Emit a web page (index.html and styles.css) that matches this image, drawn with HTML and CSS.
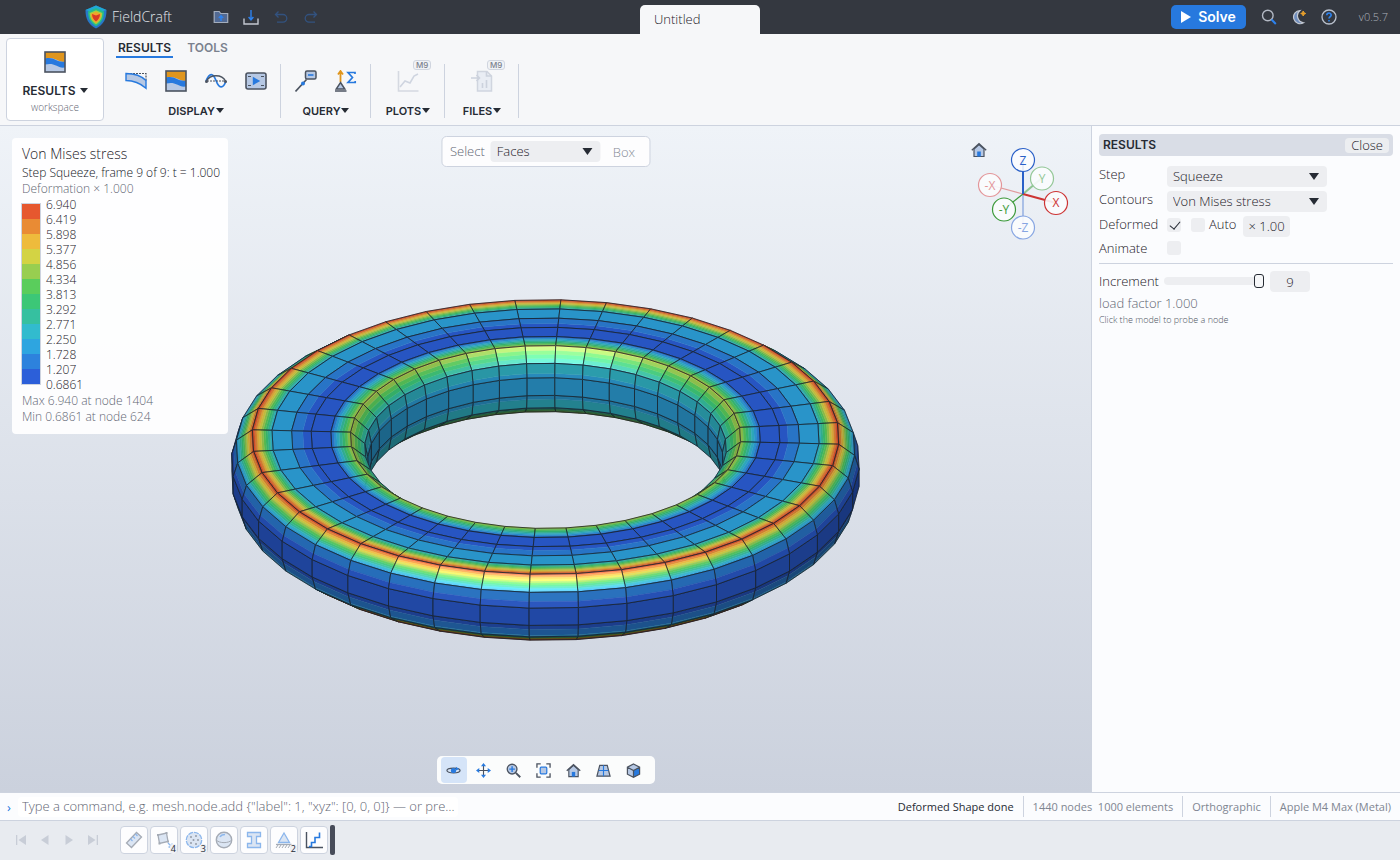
FILE: index.html
```html
<!DOCTYPE html>
<html lang="en">
<head>
<meta charset="utf-8">
<title>FieldCraft</title>
<link rel="stylesheet" href="styles.css">
</head>
<body>
<svg class="defs" width="0" height="0" aria-hidden="true">
  <defs>
    <symbol id="contour" viewBox="0 0 22 22">
      <rect x="1" y="1" width="20" height="20" fill="#b6c8e4"/>
      <path d="M1 1h20v10c-4 0-6-1-9-2.500s-6-2-11-1z" fill="#df951d"/>
      <path d="M1 7.500c5-1 8 0 11 1.500s5 2 9 1.500v6c-4 .5-6-.5-9-2s-6-2-11-1z" fill="#2779de"/>
      <rect x="1" y="1" width="20" height="20" fill="none" stroke="#4b5360" stroke-width="1.600"/>
    </symbol>
    <symbol id="home" viewBox="0 0 16 16">
      <path d="M3 7v7.500h10V7L8 2.500z" fill="#b6c8e4" stroke="#4b5360" stroke-width="1.200"/>
      <path d="M.8 8.200 8 1.800l7.200 6.400" fill="none" stroke="#4b5360" stroke-width="1.400"/>
      <path d="M6.200 9.500h3.600v5H6.200z" fill="#2779de"/>
    </symbol>
  </defs>
</svg>

<header class="titlebar">
  <div class="title-left">
    <svg class="logo" viewBox="0 0 22 24" aria-hidden="true">
      <path d="M11 .5 21.500 5c0 9-3 14.500-10.500 18.500C3.500 19.500.5 14 .5 5z" fill="#2778c8"/>
      <path d="M11 .5 21.500 5 11 8 .5 5z" fill="#20a9d4"/>
      <path d="M11 3 19 6.500c0 7-2.500 11.500-8 14.800C5.500 18 3 13.500 3 6.500z" fill="#25bb8c"/>
      <path d="M11 5.200 17.300 8c0 5-2 8.500-6.300 11.300C6.700 16.500 4.700 13 4.700 8z" fill="#a9cf3d"/>
      <path d="M11 6.700 16 9c0 4-1.500 6.500-5 9-3.500-2.500-5-5-5-9z" fill="#f0a52c"/>
      <path d="M11 10.500 15 9c0 3.500-1.500 5.500-4 7.500-2.500-2-4-4-4-7.500z" fill="#d83a24"/>
    </svg>
    <span class="brand">FieldCraft</span>
    <nav class="file-tools" aria-label="File">
      <button class="tool" aria-label="Open"><svg viewBox="0 0 16 16"><path d="M1.200 13.500v-11h5l1.500 2h7v9z" fill="#526a94" stroke="#a3adbd" stroke-width="1.200"/><path d="M8 12V7.500M5.800 9 8 6.800 10.200 9" fill="none" stroke="#2d82ee" stroke-width="1.500"/></svg></button>
      <button class="tool" aria-label="Save"><svg viewBox="0 0 16 16"><path d="M1 9.500V15h14V9.500" fill="none" stroke="#c3c8d1" stroke-width="1.400"/><path d="M8 1v9M5.600 8 8 10.800 10.400 8" fill="none" stroke="#2d82ee" stroke-width="1.400"/></svg></button>
      <button class="tool" aria-label="Undo"><svg viewBox="0 0 16 16"><path d="M5.500 2.500 2.500 5.500l3 3M2.500 5.500H10a3.800 3.800 0 0 1 0 7.600H4" fill="none" stroke="#32527f" stroke-width="1.300"/></svg></button>
      <button class="tool" aria-label="Redo"><svg viewBox="0 0 16 16"><path d="m10.500 2.500 3 3-3 3M13.500 5.500H6a3.800 3.800 0 0 0 0 7.600h6" fill="none" stroke="#32527f" stroke-width="1.300"/></svg></button>
    </nav>
  </div>
  <button class="doc-tab">Untitled</button>
  <div class="title-right">
    <button class="solve"><svg viewBox="0 0 10 12" aria-hidden="true"><path d="M0 0 10 6 0 12z" fill="#fff"/></svg>Solve</button>
    <button class="tool" aria-label="Search"><svg viewBox="0 0 16 16"><circle cx="6.800" cy="6.500" r="5.300" fill="none" stroke="#b3b9c4" stroke-width="1.400"/><path d="m10.500 10.500 4.300 4.500" stroke="#2d82ee" stroke-width="2"/></svg></button>
    <button class="tool" aria-label="Theme"><svg viewBox="0 0 16 16"><path d="M9 1.500a6.600 6.600 0 1 0 3.500 12.300A7 7 0 0 1 9 1.500z" fill="#6f8dbd" stroke="#c3c8d1" stroke-width="1.200"/><path d="m12.200 2 .8 1.700 1.700.8-1.700.8-.8 1.700-.8-1.700-1.700-.8 1.700-.8z" fill="#e8a02c" stroke="#e8a02c"/></svg></button>
    <button class="tool" aria-label="Help"><svg viewBox="0 0 16 16"><circle cx="8" cy="8" r="7" fill="none" stroke="#b9c0cc" stroke-width="1.300"/><path d="M5.800 6.300c0-3 4.400-3 4.400-.2 0 1.700-2.200 1.600-2.200 3.400M8 11v1.500" fill="none" stroke="#2d82ee" stroke-width="1.600"/></svg></button>
    <span class="version">v0.5.7</span>
  </div>
</header>

<section class="ribbon">
  <button class="workspace">
    <svg class="icon22"><use href="#contour"/></svg>
    <span class="workspace-name caret">RESULTS</span>
    <span class="workspace-sub">workspace</span>
  </button>
  <div class="ribbon-body">
    <nav class="ribbon-tabs"><button class="ribbon-tab active">RESULTS</button><button class="ribbon-tab">TOOLS</button></nav>
    <div class="groups">
      <div class="group">
        <div class="group-icons">
          <button class="big" aria-label="Deformed shape"><svg viewBox="0 0 22 22"><path d="M2 3.500h19v8" fill="none" stroke="#4b5360" stroke-width="1.200" stroke-dasharray="2 1"/><path d="M1 3.500c8 0 15 2 20 7v7.700C15 13 8 10.500 1 10.500z" fill="#b6c8e4" stroke="#2779de" stroke-width="1.400"/></svg></button>
          <button class="big" aria-label="Contours"><svg class="icon22"><use href="#contour"/></svg></button>
          <button class="big" aria-label="Mode shape"><svg viewBox="0 0 22 22"><path d="M1 11C4.500 2.500 8 2.500 11 10.500S18 19.500 21 11" fill="none" stroke="#2779de" stroke-width="1.700"/><path d="M1.500 11C5 4 17 4 20.500 11" fill="none" stroke="#4b5360" stroke-width="1.500"/><path d="M2 11h18" stroke="#4b5360" stroke-dasharray="2 1"/><circle cx="1.500" cy="11.500" r="1.500" fill="#4b5360"/><circle cx="20.500" cy="11.500" r="1.500" fill="#4b5360"/></svg></button>
          <button class="big" aria-label="Animation"><svg viewBox="0 0 22 22"><rect x="1" y="3" width="20" height="16" rx="2" fill="#b6c8e4" stroke="#4b5360" stroke-width="1.600"/><path d="M3 6.500h3M16 6.500h3M3 15.500h3M16 15.500h3" stroke="#4b5360" stroke-width="1.200"/><path d="m7.800 6.700 7.500 4.300-7.500 4.300z" fill="#2779de"/></svg></button>
        </div>
        <button class="group-label caret">DISPLAY</button>
      </div>
      <div class="group">
        <div class="group-icons">
          <button class="big" aria-label="Probe"><svg viewBox="0 0 22 22"><path d="m.5 21.500 11-12" stroke="#4b5360" stroke-width="1.600"/><circle cx="8" cy="13.500" r="2" fill="#2779de"/><rect x="10.500" y="1" width="10.500" height="8" rx="1.500" fill="#b6c8e4" stroke="#4b5360" stroke-width="1.500"/><path d="M13 5h5.500" stroke="#2779de" stroke-width="1.600"/></svg></button>
          <button class="big" aria-label="Reactions"><svg viewBox="0 0 22 22"><path d="M5.500 12V2M3 4.500 5.500 1 8 4.500" fill="none" stroke="#df951d" stroke-width="1.800"/><path d="m5.500 12.500 4.300 6.500H1.200z" fill="#b6c8e4" stroke="#4b5360" stroke-width="1.500"/><path d="M0 21h11.500" stroke="#4b5360" stroke-width="1.500"/><path d="M20 4V2.500h-7l4.500 5-4.500 5h7.200V11" fill="none" stroke="#2779de" stroke-width="1.700"/></svg></button>
        </div>
        <button class="group-label caret">QUERY</button>
      </div>
      <div class="group narrow">
        <div class="group-icons">
          <button class="big" aria-label="Plots"><svg viewBox="0 0 22 22"><path d="M1.500 1v20h20" fill="none" stroke="#d5d9e1" stroke-width="1.600"/><path d="m3 17 5-6 5 2 4-7 4-2" fill="none" stroke="#cfd5e0" stroke-width="1.600"/></svg><span class="badge">M9</span></button>
        </div>
        <button class="group-label caret">PLOTS</button>
      </div>
      <div class="group narrow">
        <div class="group-icons">
          <button class="big" aria-label="Files"><svg viewBox="0 0 22 22"><path d="M6.500 1.500H16l4.500 4.500v15h-14z" fill="#e9edf4" stroke="#d0d5df" stroke-width="1.500"/><path d="M15.500 1.500V6h5M11.500 18v-5M15.500 18v-8" fill="none" stroke="#ccd2dd" stroke-width="1.600"/><path d="M0 8h8M5.500 5l3 3-3 3" fill="none" stroke="#ccd2dd" stroke-width="1.600"/></svg><span class="badge">M9</span></button>
        </div>
        <button class="group-label caret">FILES</button>
      </div>
    </div>
  </div>
</section>

<main class="workarea">
  <section class="viewport">
    <svg class="model" id="model" viewBox="0 126 1091 666" role="img" aria-label="Contour plot of the squeezed ring"></svg>

    <aside class="legend">
      <h2 class="legend-title">Von Mises stress</h2>
      <p class="legend-step">Step Squeeze, frame 9 of 9: t = 1.000</p>
      <p class="legend-note">Deformation × 1.000</p>
      <div class="scale">
        <div class="scale-bar"><i class="c12"></i><i class="c11"></i><i class="c10"></i><i class="c9"></i><i class="c8"></i><i class="c7"></i><i class="c6"></i><i class="c5"></i><i class="c4"></i><i class="c3"></i><i class="c2"></i><i class="c1"></i></div>
        <ol class="ticks"><li>6.940</li><li>6.419</li><li>5.898</li><li>5.377</li><li>4.856</li><li>4.334</li><li>3.813</li><li>3.292</li><li>2.771</li><li>2.250</li><li>1.728</li><li>1.207</li><li>0.6861</li></ol>
      </div>
      <p class="legend-note">Max 6.940 at node 1404</p>
      <p class="legend-note">Min 0.6861 at node 624</p>
    </aside>

    <div class="select-bar">
      <label for="pick">Select</label>
      <span class="dropdown"><select id="pick"><option>Faces</option></select></span>
      <button class="box-button" disabled>Box</button>
    </div>

    <div class="gizmo">
      <button class="gizmo-home" aria-label="Home view"><svg><use href="#home"/></svg></button>
      <svg class="axes" viewBox="976 146 94 96" role="img" aria-label="View axes">
        <g fill="#fbfcfe" fill-opacity=".9" stroke-width="1.200" text-anchor="middle">
          <path d="M1023 194 1042 178" stroke="#8fc592" stroke-width="2"/>
          <path d="M1023 194 990 185" stroke="#e09a9c"/>
          <path d="M1023 194V228" stroke="#7f9fdc"/>
          <circle cx="1042" cy="178.500" r="11.500" stroke="#93c796"/>
          <circle cx="990" cy="185" r="11.500" stroke="#e3969a"/>
          <circle cx="1023" cy="227.500" r="11.500" stroke="#86a5e2"/>
          <path d="M1023 194 1004 209" stroke="#3c9a3a"/>
          <path d="M1023 194 1056 203" stroke="#cd3434" stroke-width="2"/>
          <path d="M1023 194V160" stroke="#2a60c8" stroke-width="2"/>
          <circle cx="1004" cy="209.500" r="11.500" stroke="#3c9a3a"/>
          <circle cx="1056" cy="203" r="11.500" stroke="#cd3434"/>
          <circle cx="1023" cy="160" r="11.500" stroke="#2a60c8"/>
        </g>
        <g class="axis-names" text-anchor="middle">
          <text x="1042" y="183" fill="#93c796">Y</text>
          <text x="990" y="190" fill="#e3969a">-X</text>
          <text x="1023" y="232" fill="#86a5e2">-Z</text>
          <text x="1004" y="214" fill="#3c9a3a">-Y</text>
          <text x="1056" y="207" fill="#cd3434">X</text>
          <text x="1023" y="165" fill="#2a60c8">Z</text>
        </g>
      </svg>
    </div>

    <nav class="view-tools" aria-label="View">
      <button class="view-tool on" aria-label="Orbit"><svg viewBox="0 0 16 16"><ellipse cx="8" cy="8" rx="7" ry="2.600" fill="none" stroke="#4b5360" stroke-width="1.300"/><circle cx="8" cy="8" r="2.800" fill="#2779de"/><path d="m10.500 4 3.500 2.500-3.500 1.500z" fill="#2779de"/></svg></button>
      <button class="view-tool" aria-label="Pan"><svg viewBox="0 0 16 16"><path d="M8 2v12M2 8h12" stroke="#4b5360" stroke-width="1.200"/><path d="m8 0 2.700 3.500H5.300zM8 16l2.700-3.500H5.300zM0 8l3.500-2.700v5.400zM16 8l-3.500-2.700v5.400z" fill="#2779de"/></svg></button>
      <button class="view-tool" aria-label="Zoom"><svg viewBox="0 0 16 16"><circle cx="6.500" cy="6.500" r="5.200" fill="#b6c8e4" stroke="#4b5360" stroke-width="1.400"/><path d="m10.500 10.500 4.700 4.700" stroke="#4b5360" stroke-width="2"/><path d="M3.500 6.500h6M6.500 3.500v6" stroke="#2779de" stroke-width="1.500"/></svg></button>
      <button class="view-tool" aria-label="Fit"><svg viewBox="0 0 16 16"><path d="M1 5V1h4M11 1h4v4M15 11v4h-4M5 15H1v-4" fill="none" stroke="#4b5360" stroke-width="1.400"/><rect x="4.500" y="4.500" width="7" height="7" rx="1" fill="#b6c8e4" stroke="#2779de" stroke-width="1.300"/></svg></button>
      <button class="view-tool" aria-label="Home"><svg><use href="#home"/></svg></button>
      <button class="view-tool" aria-label="Perspective"><svg viewBox="0 0 16 16"><path d="M4 2.500h8L15 14H1z" fill="#b6c8e4" stroke="#4b5360" stroke-width="1.300"/><path d="M8 2.500V14M2.800 8h10.400" stroke="#2779de" stroke-width="1.200"/></svg></button>
      <button class="view-tool" aria-label="Standard views"><svg viewBox="0 0 16 16"><path d="M8 1 14.500 4.500v7.500L8 15.300 1.500 12V4.500z" fill="#b6c8e4"/><path d="M8 8 14.500 4.500v7.500L8 15.300z" fill="#2779de"/><path d="M8 1 14.500 4.500v7.500L8 15.300 1.500 12V4.500zM1.500 4.500 8 8l6.500-3.500M8 8v7" fill="none" stroke="#4b5360" stroke-width="1.300"/></svg></button>
    </nav>
  </section>

  <aside class="panel">
    <div class="panel-head"><h2>RESULTS</h2><button class="close">Close</button></div>
    <div class="row"><label for="step">Step</label><span class="dropdown"><select id="step"><option>Squeeze</option></select></span></div>
    <div class="row"><label for="contours">Contours</label><span class="dropdown"><select id="contours"><option>Von Mises stress</option></select></span></div>
    <div class="row"><label for="deformed">Deformed</label><input class="check" type="checkbox" id="deformed" checked><span class="auto"><input class="check" type="checkbox" id="auto"><label for="auto">Auto</label></span><button class="factor">× 1.00</button></div>
    <div class="row short"><label for="animate">Animate</label><input class="check" type="checkbox" id="animate"></div>
    <div class="row increment"><label for="increment">Increment</label><input class="slider" type="range" id="increment" min="0" max="9" value="9"><input class="number" type="text" value="9" aria-label="Increment value"></div>
    <p class="load">load factor 1.000</p>
    <p class="hint">Click the model to probe a node</p>
  </aside>
</main>

<footer class="status">
  <label class="prompt" for="command">›</label>
  <input class="command" id="command" type="text" placeholder='Type a command, e.g. mesh.node.add {"label": 1, "xyz": [0, 0, 0]} — or pre…'>
  <div class="status-items"><span class="done">Deformed Shape done</span><span>1440 nodes&nbsp; 1000 elements</span><span>Orthographic</span><span>Apple M4 Max (Metal)</span></div>
</footer>

<nav class="timeline" aria-label="History">
  <div class="transport">
    <button aria-label="First"><svg viewBox="0 0 12 12"><path d="M1 1h1.300v10H1zM11 1v10L3.500 6z"/></svg></button>
    <button aria-label="Previous"><svg viewBox="0 0 12 12"><path d="M9.500 1v10L2 6z"/></svg></button>
    <button aria-label="Next"><svg viewBox="0 0 12 12"><path d="M2.500 1v10L10 6z"/></svg></button>
    <button aria-label="Last"><svg viewBox="0 0 12 12"><path d="M9.700 1H11v10H9.700zM1 1v10l7.500-5z"/></svg></button>
  </div>
  <div class="steps">
    <button class="step" aria-label="Sketch"><svg viewBox="0 0 18 18"><path d="m1.500 12 10-10.500 5 4.500-10 10.500z" fill="#dbe5f3" stroke="#a5abb5" stroke-width="1.300"/><path d="m5.500 8 2 2M8 5.500l2 2M10.500 3l2 2" stroke="#8bb6ec" stroke-width="1.200"/></svg></button>
    <button class="step" aria-label="Part"><svg viewBox="0 0 18 18"><path d="m3 4 8.500-2L13 10.500 4.500 12.500z" fill="#dbe5f3" stroke="#a5abb5" stroke-width="1.300"/><path d="M2 3h2v2H2zM10.500 1h2v2h-2zM3.500 11.500h2v2h-2zM12 9.500h2v2h-2z" fill="#a5abb5"/><path d="m13 12 4 4M13.500 16H17v-3.500" fill="none" stroke="#8bb6ec" stroke-width="1.300"/></svg><span class="count">4</span></button>
    <button class="step" aria-label="Mesh"><svg viewBox="0 0 18 18"><circle cx="9" cy="9" r="7.700" fill="#dbe5f3" stroke="#8bb6ec" stroke-width="1.300" stroke-dasharray="5 1"/><g fill="#949ba7"><circle cx="6" cy="6" r="1"/><circle cx="11" cy="5" r="1"/><circle cx="8.500" cy="9" r="1"/><circle cx="13" cy="9" r="1"/><circle cx="6" cy="12" r="1"/><circle cx="11" cy="13" r="1"/></g></svg><span class="count">3</span></button>
    <button class="step" aria-label="Material"><svg viewBox="0 0 18 18"><circle cx="9" cy="9" r="7.700" fill="#dbe5f3" stroke="#a5abb5" stroke-width="1.400"/><path d="M1.300 9c3 3.500 12.400 3.500 15.400 0" fill="none" stroke="#a5abb5"/><path d="M5 6c1-2 3-2.500 5-2.500" fill="none" stroke="#8bb6ec" stroke-width="1.500"/></svg></button>
    <button class="step" aria-label="Section"><svg viewBox="0 0 18 18"><path d="M2.500 1.500h13v4h-4v7h4v4h-13v-4h4v-7h-4z" fill="#dbe5f3" stroke="#8bb6ec" stroke-width="1.300"/></svg></button>
    <button class="step" aria-label="Support"><svg viewBox="0 0 18 18"><path d="m9 2 5.500 9.500h-11z" fill="#dbe5f3" stroke="#8bb6ec" stroke-width="1.300"/><path d="M1 13.500h16" stroke="#a5abb5" stroke-width="1.300"/><path d="m1 17 2-3M4 17l2-3M7 17l2-3M10 17l2-3M13 17l2-3" stroke="#a5abb5"/></svg><span class="count">2</span></button>
    <button class="step" aria-label="Analysis step"><svg viewBox="0 0 18 18"><path d="M1.500 1v15.500H18" fill="none" stroke="#4b5360" stroke-width="1.400"/><path d="M4 15.500h2.500v-4H10v-5h4.500v-5" fill="none" stroke="#2779de" stroke-width="1.600"/></svg></button>
    <span class="playhead"></span>
  </div>
</nav>
<script src="model.js"></script>
</body>
</html>
```
FILE: styles.css
```css
* { box-sizing: border-box; }
body { margin: 0; min-height: 100vh; display: flex; flex-direction: column; font: 300 13px/16px "Open Sans", "Noto Sans", sans-serif; color: #1c2028; background: #fbfcfe; }
button, input, select { font: inherit; color: inherit; border: 0; padding: 0; margin: 0; background: none; border-radius: 4px; }
h2, p, ol { margin: 0; padding: 0; list-style: none; font-weight: 300; }
svg { display: block; }
.defs { position: absolute; }

.titlebar { height: 34px; flex: none; display: grid; grid-template-columns: 1fr 120px 1fr; background: #343840; color: #e2e5ea; }
.title-left, .title-right { display: flex; align-items: center; }
.title-left { padding-left: 85px; }
.logo { width: 22px; height: 24px; }
.brand { margin-left: 5px; width: 94px; font-size: 14px; }
.file-tools { display: flex; }
.tool { width: 30px; height: 30px; display: grid; place-items: center; }
.tool svg { width: 16px; height: 16px; }
.doc-tab { margin-top: 5px; padding: 0 0 2px 14px; text-align: left; background: #f6f7f9; color: #1c2028; border-radius: 5px 5px 0 0; }
.title-right { justify-content: flex-end; padding-right: 12px; }
.solve { display: flex; align-items: center; gap: 7px; height: 24px; padding: 0 10px; margin-right: 8px; background: #2779de; color: #fff; font: 600 14px/16px Inter, sans-serif; border-radius: 5px; }
.solve svg { width: 10px; height: 12px; }
.version { margin-left: 15px; font-size: 11px; color: #abb0ba; }

.ribbon { height: 92px; flex: none; display: flex; padding-left: 6px; background: #f6f7f9; border-bottom: 1px solid #cdd3df; }
.workspace { width: 98px; height: 83px; margin-top: 4px; display: flex; flex-direction: column; align-items: center; padding-top: 12px; background: #fff; border: 1px solid #cdd3df; }
.icon22 { width: 22px; height: 22px; }
.workspace-name { margin-top: 10px; font: 600 12px/16px Inter, sans-serif; color: #262b34; }
.workspace-sub { margin-top: 1px; font-size: 10px; line-height: 14px; color: #5f6673; }
.caret::after { content: ""; display: inline-block; margin-left: 4px; vertical-align: 2px; border: 4px solid transparent; border-top: 5px solid #262b34; border-bottom: 0; }
.ribbon-body { margin-left: 7px; display: flex; flex-direction: column; }
.ribbon-tabs { height: 24px; margin: 4px 0 2px 5px; display: flex; gap: 12px; }
.ribbon-tab { height: 20px; padding: 2px 2px 0; font: 600 12px/16px Inter, sans-serif; color: #7a818e; border-radius: 0; border-bottom: 2px solid transparent; }
.ribbon-tab.active { color: #262b34; border-color: #2779de; }
.groups { display: flex; }
.group { height: 54px; padding: 0 4px 0 5px; display: flex; flex-direction: column; align-items: center; border-right: 1px solid #cdd3df; }
.narrow { width: 74px; }
.group-icons { display: flex; height: 39px; flex: none; }
.big { position: relative; width: 40px; height: 34px; display: grid; place-items: center; }
.big svg { width: 22px; height: 22px; }
.badge { position: absolute; left: 25px; top: -4px; padding: 0 2px; font: 500 8px/8px Inter, sans-serif; color: #7a818e; border: 1px solid #d0d5df; border-radius: 3px; background: #f0f2f6; }
.group-label { font: 600 11px/16px Inter, sans-serif; color: #262b34; white-space: nowrap; }
.group-label.caret::after { margin-left: 1px; }

.workarea { flex: 1; display: flex; min-height: 0; }
.viewport { flex: 1; position: relative; overflow: hidden; background: linear-gradient(#eff3f8, #cbd1dd); }
.model { position: absolute; inset: 0; width: 100%; height: 100%; }
.legend { position: absolute; left: 12px; top: 12px; width: 216px; padding: 7px 10px 9px; background: rgba(255, 255, 255, .92); border-radius: 4px; font-size: 12px; white-space: nowrap; }
.legend-title { font-size: 14px; line-height: 18px; margin-bottom: 2px; }
.legend-step { color: #10141c; }
.legend-note { color: #5f6673; }
.scale { display: flex; gap: 5px; margin: 0 0 1px -1px; }
.scale-bar { display: flex; flex-direction: column; width: 20px; margin: 6px 0 7px; border: 1px solid #cdd3df; }
.scale-bar i { flex: 1; }
.ticks { line-height: 15px; }
.c1 { background: #2c5fd9; } .c2 { background: #2d82dd; } .c3 { background: #2ea5e0; } .c4 { background: #32bbce; }
.c5 { background: #36c0a0; } .c6 { background: #3cc777; } .c7 { background: #5acd5c; } .c8 { background: #98ce50; }
.c9 { background: #d3d344; } .c10 { background: #eebb3c; } .c11 { background: #e98b34; } .c12 { background: #e6582f; }

.dropdown { position: relative; display: block; }
.dropdown::after { content: ""; position: absolute; right: 8px; top: 7px; border: 5px solid transparent; border-top: 7px solid #262b34; border-bottom: 0; pointer-events: none; }
select { appearance: none; width: 100%; height: 21px; padding: 0 6px 1px; background: #edeef1; display: block; }
.select-bar { position: absolute; top: 10px; left: 50%; transform: translateX(-50%); display: flex; align-items: center; gap: 6px; height: 31px; padding: 0 14px 0 8px; background: #fdfdfe; border: 1px solid #cdd3df; border-radius: 5px; color: #5f6673; }
.select-bar select { width: 110px; color: #1c2028; }
.select-bar label { padding-bottom: 2px; }
.box-button { margin-left: 6px; color: #868c96; }
.gizmo { position: absolute; right: 21px; top: 16px; width: 99px; height: 100px; }
.gizmo-home { position: absolute; left: 0; top: 0; }
.gizmo-home svg { width: 16px; height: 16px; }
.axes { position: absolute; right: 0; top: 4px; width: 94px; height: 96px; }
.axis-names { font-size: 12px; font-weight: 400; }
.view-tools { position: absolute; bottom: 8px; left: 50%; transform: translateX(-50%); display: flex; gap: 4px; padding: 1px 8px 1px 4px; background: #fbfcfc; border-radius: 5px; }
.view-tool { width: 26px; height: 26px; display: grid; place-items: center; }
.view-tool svg { width: 15px; height: 15px; }
.on { background: #d5e4f8; }

.panel { width: 309px; padding: 8px 7px; border-left: 1px solid #cdd3df; background: #fbfcfe; display: flex; flex-direction: column; }
.panel-head { display: flex; align-items: center; justify-content: space-between; height: 22px; padding: 0 4px; margin-bottom: 10px; background: #d9dde6; border-radius: 4px; }
.panel-head h2 { font: 600 12px/16px Inter, sans-serif; color: #262b34; }
.close { height: 15px; padding: 0 6px; background: #eceef1; line-height: 15px; }
.row { display: flex; height: 21px; margin-bottom: 4px; }
.row > label { width: 68px; line-height: 16px; }
.row .dropdown { width: 160px; }
.check { appearance: none; width: 14px; height: 14px; margin-top: 2px; background: #edeef1; border-radius: 3px; }
.check:checked::after { content: ""; display: block; width: 5px; height: 9px; margin: 1px 0 0 5px; border: solid #262b34; border-width: 0 1px 1px 0; transform: rotate(40deg); }
.auto { display: flex; width: 52px; margin: 0 0 0 10px; gap: 4px; line-height: 16px; }
.factor { width: 47px; padding-bottom: 1px; background: #edeef1; }
.row.short { height: 24px; padding-bottom: 5px; margin: -1px 0 7px; border-bottom: 1px solid #cdd3df; }
.row.short .check { margin-top: 1px; }
.row.increment { align-items: center; }
.row.increment > label { width: 65px; padding-bottom: 1px; }
.slider { appearance: none; width: 100px; height: 14px; margin-bottom: 2px; }
.slider::-webkit-slider-runnable-track { height: 8px; background: #edeef1; border-radius: 4px; }
.slider::-webkit-slider-thumb { appearance: none; width: 10px; height: 14px; margin-top: -3px; background: #f6f7f9; border: 1px solid #262b34; border-radius: 3px; }
.number { width: 40px; height: 21px; margin-left: 6px; background: #edeef1; text-align: center; }
.load { margin-top: -1px; color: #5f6673; }
.hint { font-size: 9px; line-height: 17px; color: #4e5562; }

.status { height: 29px; flex: none; display: flex; align-items: center; justify-content: space-between; border: solid #cdd3df; border-width: 1px 0; background: #fbfcfe; }
.prompt { width: 18px; text-align: center; color: #2779de; font-weight: 400; }
.command { width: 440px; height: 20px; padding: 0 4px 1px; background: #fff; }
.command::placeholder { color: #5f6673; opacity: 1; }
.status-items { margin-left: auto; display: flex; font-size: 11px; font-weight: 400; line-height: 21px; color: #7f8692; white-space: nowrap; }
.status-items span { padding: 0 9px; border-left: 1px solid #cdd3df; }
.status-items .done { color: #262b34; border: 0; }

.timeline { height: 39px; flex: none; display: flex; align-items: center; padding: 0 0 1px 15px; background: #e8ebf0; }
.transport { display: flex; gap: 12px; width: 105px; }
.transport svg { width: 12px; height: 12px; fill: #c8cdd7; }
.steps { display: flex; gap: 2px; align-items: center; }
.step { position: relative; width: 28px; height: 28px; display: grid; place-items: center; background: #fdfdfe; border: 1px solid #cdd3df; }
.step svg { width: 18px; height: 18px; }
.count { position: absolute; right: 0; bottom: -1px; padding: 0 1px; font-size: 9px; font-weight: 400; line-height: 10px; color: #262b34; background: #eef0f4; border-radius: 3px; }
.playhead { width: 5px; height: 30px; border-radius: 2px; background: #474c59; }
```
FILE: model.js
```js
// Squeezed ring: 40 segments around, 5 x 5 elements in the section.
const SEGMENTS = 40;
const CX = 545.5, CY = 437, SIN = 0.468, COS = 0.884;
const LIGHT = [-0.1, 0.51, 0.86];
const HALF = [-0.05, 0.72, 0.69];
const BANDS = [[44,95,217],[45,130,221],[46,165,224],[50,187,206],[54,192,160],[60,199,119],
  [90,205,92],[152,206,80],[211,211,68],[238,187,60],[233,139,52],[230,88,47]];
const MIN = 0.6861, STEP = (6.94 - MIN) / 12;

// Section outline, clockwise from the inner bottom: radius, height, stress.
const section = [
  [195.3, -74.6, 4.95], [181, -62.6, 2.6], [178, -47, 2.1], [178, -27, 2.1], [181, -12.4, 2.6],
  [195.3, 0, 4.95], [215, 0, 1.15], [234.6, 0, 0.81], [254.2, 0, 1.728], [273.9, 0, 2.23],
  [293.5, 0, 6.94], [309.5, -12.2, 1.74], [314, -27.5, 0.85], [314, -47.1, 0.85], [309.5, -62.4, 1.85],
  [293.5, -74.6, 6.94]
];

const point = (r, z, a) => [r * Math.sin(a), r * Math.cos(a), z];
const project = p => (CX + p[0]).toFixed(1) + "," + (CY + p[1] * SIN - p[2] * COS).toFixed(1);
const dot = (a, b) => a[0] * b[0] + a[1] * b[1] + a[2] * b[2];
const mix = (a, b, t) => a.map((v, i) => v + (b[i] - v) * t);

const faces = [];
for (let s = 0; s < SEGMENTS; s++) {
  const a0 = (6 + s * 9) * Math.PI / 180, a1 = a0 + 9 * Math.PI / 180, am = (a0 + a1) / 2;
  for (let i = 0; i < section.length - 1; i++) {
    const p = section[i], q = section[i + 1];
    const dr = q[0] - p[0], dz = q[1] - p[1], len = Math.hypot(dr, dz);
    const n = [-dz / len * Math.sin(am), -dz / len * Math.cos(am), dr / len];
    if (n[1] * COS + n[2] * SIN <= 0) continue;
    const mid = point((p[0] + q[0]) / 2, (p[1] + q[1]) / 2, am);
    faces.push({ p, q, a0, a1, n, depth: mid[1] * COS + mid[2] * SIN });
  }
}
faces.sort((a, b) => a.depth - b.depth);

let out = "";
for (const f of faces) {
  const shade = 0.56 + 0.39 * dot(f.n, LIGHT);
  const gloss = 80 * Math.pow(Math.max(0, dot(f.n, HALF)), 20);
  const v0 = f.p[2], v1 = f.q[2];
  const cuts = [0, 1];
  for (let k = 1; k < 12; k++) {
    const t = (MIN + k * STEP - v0) / (v1 - v0);
    if (t > 0 && t < 1) cuts.push(t);
  }
  cuts.sort((a, b) => a - b);
  for (let c = 0; c < cuts.length - 1; c++) {
    const t0 = cuts[c], t1 = cuts[c + 1];
    const value = v0 + (v1 - v0) * (t0 + t1) / 2;
    const band = BANDS[Math.max(0, Math.min(11, Math.floor((value - MIN) / STEP)))];
    const rgb = band.map(x => Math.min(255, Math.round(x * shade + gloss))).join(",");
    const a = mix(f.p, f.q, t0), b = mix(f.p, f.q, t1);
    const pts = [point(a[0], a[1], f.a0), point(b[0], b[1], f.a0), point(b[0], b[1], f.a1), point(a[0], a[1], f.a1)];
    out += `<polygon points="${pts.map(project).join(" ")}" fill="rgb(${rgb})" stroke="rgb(${rgb})" stroke-width=".4"/>`;
  }
  const edge = [point(f.p[0], f.p[1], f.a0), point(f.q[0], f.q[1], f.a0), point(f.q[0], f.q[1], f.a1), point(f.p[0], f.p[1], f.a1)];
  out += `<polygon points="${edge.map(project).join(" ")}" fill="none" stroke="#182129" stroke-width=".8" stroke-linejoin="round"/>`;
}
document.getElementById("model").innerHTML = out;
```
